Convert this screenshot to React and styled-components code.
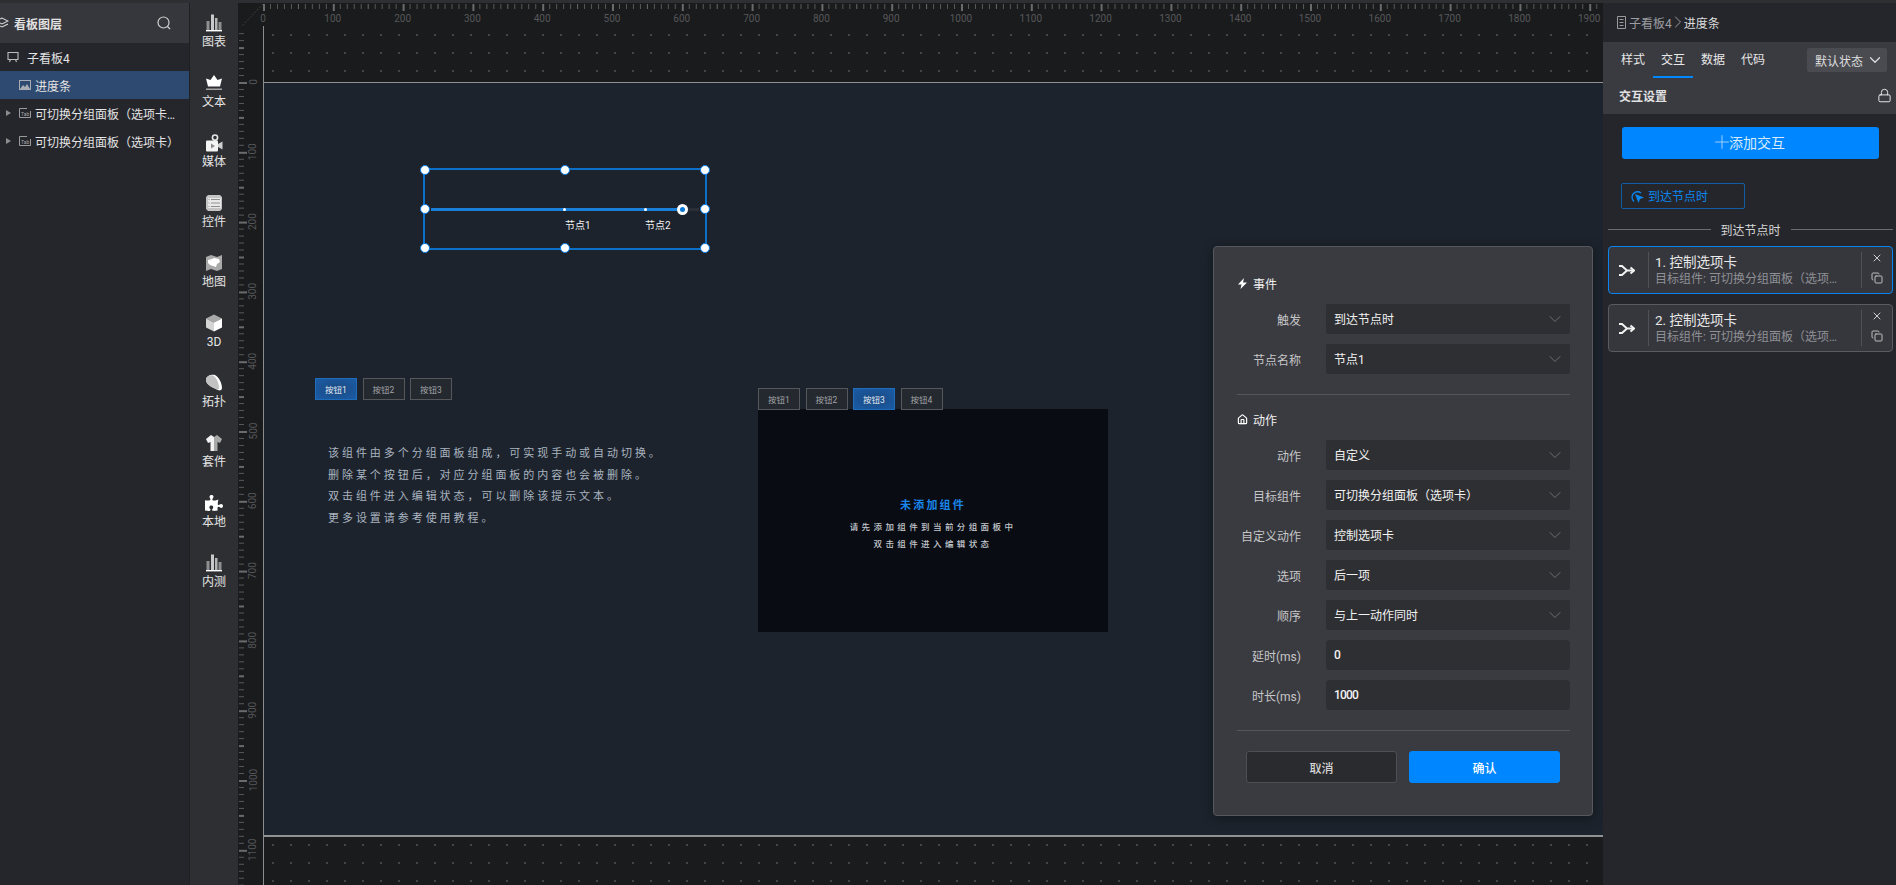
import React from 'react';
import styled, { createGlobalStyle } from 'styled-components';
import { ChevronDown, ChevronRight, X, Copy, Lock, Home, Plus } from 'lucide-react';
import { FaPuzzlePiece } from 'react-icons/fa';

const SCALE = 0.698;

const toolItems = [
  ['chart', '图表'], ['text', '文本'], ['media', '媒体'], ['control', '控件'], ['map', '地图'],
  ['cube', '3D'], ['topo', '拓扑'], ['suit', '套件'], ['local', '本地'], ['chart', '内测'],
];

const eventRows = [['触发', '到达节点时'], ['节点名称', '节点1']];
const actionRows = [
  ['动作', '自定义'], ['目标组件', '可切换分组面板（选项卡）'], ['自定义动作', '控制选项卡'],
  ['选项', '后一项'], ['顺序', '与上一动作同时'],
];
const inputRows = [['延时(ms)', '0'], ['时长(ms)', '1000']];

const handles = [[0, 0], [50, 0], [100, 0], [0, 50], [100, 50], [0, 100], [50, 100], [100, 100]];

const ToolIcon = ({ kind }) => {
  if (kind === 'local') return <FaPuzzlePiece size={18} color="#fff" />;
  return (
    <svg width="18" height="18" viewBox="0 0 18 18">
      {kind === 'chart' && (
        <>
          <rect x="1" y="16" width="16" height="1.4" fill="#fff" />
          <rect x="1.5" y="7" width="3" height="9" fill="#8f8f8f" />
          <rect x="6" y="0.5" width="3" height="15.5" fill="#c9c9c9" />
          <rect x="10" y="4" width="2.5" height="12" fill="#b5b5b5" />
          <rect x="13.5" y="8" width="3" height="8" fill="#8f8f8f" />
        </>
      )}
      {kind === 'text' && (
        <>
          <polygon points="9,1 12.5,6 17,4.5 15,12.5 3,12.5 1,4.5 5.5,6" fill="#fff" />
          <rect x="1" y="14.5" width="16" height="1.5" fill="#a5a5a5" />
        </>
      )}
      {kind === 'media' && (
        <>
          <circle cx="10" cy="3.6" r="2.6" fill="none" stroke="#e4e4e4" strokeWidth="1.6" />
          <rect x="1" y="6.5" width="12" height="11" rx="1" fill="#f4f4f4" />
          <polygon points="13,10 17.5,7.5 17.5,15.5 13,13" fill="#cfcfcf" />
          <polygon points="6,9.5 10,12 6,14.5" fill="#8a8a8a" />
        </>
      )}
      {kind === 'control' && (
        <>
          <path d="M3 1h12l2 2v12l-2 2H3l-2-2V3z" fill="#c4c4c4" />
          <rect x="3" y="4" width="13" height="10" fill="#e8e8e8" />
          <path d="M6 5.5h9M6 9h9M6 12.5h9" stroke="#8f8f8f" strokeWidth="1.2" />
          <path d="M3.5 5.5h1M3.5 9h1M3.5 12.5h1" stroke="#8f8f8f" strokeWidth="1.2" />
        </>
      )}
      {kind === 'map' && (
        <>
          <polygon points="1,3 6,1 12,3 17,1 17,15 12,17 6,15 1,17" fill="#a9a9a9" />
          <path d="M3 6l4-1 2-1 5 1 1 3-3 2-1 3-3-1-3-1-2-2z" fill="#fff" />
        </>
      )}
      {kind === 'cube' && (
        <>
          <polygon points="9,0.5 17,4.5 9,8.5 1,4.5" fill="#a8a8a8" />
          <polygon points="1,4.5 9,8.5 9,17.5 1,13.5" fill="#d4d4d4" />
          <polygon points="17,4.5 9,8.5 9,17.5 17,13.5" fill="#fff" />
        </>
      )}
      {kind === 'topo' && (
        <>
          <path d="M1 6C1 2 6 0 10 1c4 2 7 8 7 13 0 2-2 3-4 2C9 14 1 11 1 6z" fill="#fff" />
          <path d="M1 6C1 2 5 .5 8 1.5c4 2 6 8 6 13-1 1-1 1.5-2 1C8 14 1 11 1 6z" fill="#c2c2c2" />
        </>
      )}
      {kind === 'suit' && (
        <>
          <path d="M6 1L1 5l2 4 2.5-1v9H9V3z" fill="#f2f2f2" />
          <path d="M12 1l5 4-2 4-2.5-1v9H9V3z" fill="#a8a8a8" />
        </>
      )}
    </svg>
  );
};

const HRuler = () => {
  const ticks = [];
  for (let v = 0; v <= 1920; v += 10) ticks.push(v);
  return (
    <RulerSvg>
      {ticks.map((v) => {
        const major = v % 100 === 0;
        const mid = v % 50 === 0;
        return (
          <rect key={v} x={v * SCALE} y="1" width={major ? 2 : 1} height={major ? 7 : 5} fill={major || mid ? '#6a6b6d' : '#58595b'} />
        );
      })}
      {ticks.filter((v) => v % 100 === 0).map((v) => (
        <text key={v} x={v * SCALE} y="18.5" textAnchor="middle" fontSize="10" fill="#56575a" fontFamily="Roboto, sans-serif">{v}</text>
      ))}
    </RulerSvg>
  );
};

const VRuler = () => {
  const ticks = [];
  for (let v = -70; v <= 1200; v += 10) ticks.push(v);
  const y = (v) => 56 + v * SCALE;
  return (
    <RulerSvg>
      {ticks.map((v) => {
        const major = v % 100 === 0;
        const mid = v % 50 === 0;
        return (
          <rect key={v} x="1" y={y(v)} width={major ? 8 : 5} height={major || mid ? 2 : 1} fill={major || mid ? '#6a6b6d' : '#58595b'} />
        );
      })}
      {ticks.filter((v) => v % 100 === 0 && v >= 0).map((v) => (
        <text key={v} x="18.5" y={y(v)} textAnchor="middle" fontSize="10" fill="#56575a" fontFamily="Roboto, sans-serif"
          transform={`rotate(-90 18.5 ${y(v)})`}>{v}</text>
      ))}
    </RulerSvg>
  );
};

const FormRow = ({ label, value, input }) => (
  <Row>
    <RowLabel>{label}</RowLabel>
    <Field $input={input}>
      <span>{value}</span>
      {!input && <ChevronDown size={20} color="#6d6e72" strokeWidth={1.2} />}
    </Field>
  </Row>
);

const ActionCard = ({ index, active }) => (
  <Card $active={active}>
    <CardIcon>
      <svg width="16" height="11" viewBox="0 0 16 11" fill="none" stroke="#f2f2f2" strokeWidth="2">
        <path d="M0 1h3l5 4.5h7M0 10h3l5-4.5" />
        <path d="M11.5 2.5L15 5.5 11.5 8.5" />
      </svg>
    </CardIcon>
    <CardBody>
      <CardTitle>{index}. 控制选项卡</CardTitle>
      <CardSub>目标组件: 可切换分组面板（选项卡）</CardSub>
    </CardBody>
    <CardActions>
      <X size={12} color="#cfcfcf" />
      <Copy size={12} color="#bdbdbd" />
    </CardActions>
  </Card>
);

export default function App() {
  return (
    <>
      <GlobalStyle />
      <TopStrip />
      <Shell>
        <Sidebar>
          <SidebarHead>
            <HeadTitle>
              <svg width="14" height="12" viewBox="0 0 14 12" fill="none" stroke="#d8d8d8" strokeWidth="1.1">
                <path d="M7 1L1 4l6 3 6-3zM1 7l6 3 6-3" />
              </svg>
              <span>看板图层</span>
            </HeadTitle>
            <svg width="14" height="14" viewBox="0 0 14 14" fill="none" stroke="#cfcfcf" strokeWidth="1.2">
              <circle cx="6.5" cy="6.5" r="5.5" />
              <path d="M10.5 10.5l2.5 2.5" />
            </svg>
          </SidebarHead>
          <LayerRow $indent={7} $gap={8}>
            <svg width="12" height="12" viewBox="0 0 12 12" fill="none" stroke="#bdbdbd" strokeWidth="1.1">
              <path d="M1 1.5h10v7H1zM3.5 8.5L2.5 11M8.5 8.5l1 2.5" />
            </svg>
            <span>子看板4</span>
          </LayerRow>
          <LayerRow $indent={19} $active>
            <svg width="12" height="10" viewBox="0 0 12 10">
              <rect x=".5" y=".5" width="11" height="9" fill="none" stroke="#a8adb6" />
              <path d="M1 9l3-4 2 2 2-3 3 5z" fill="#a8adb6" />
            </svg>
            <span>进度条</span>
          </LayerRow>
          {['可切换分组面板（选项卡）1', '可切换分组面板（选项卡）'].map((name) => (
            <LayerRow key={name} $indent={6}>
              <Caret />
              <svg width="12" height="10" viewBox="0 0 12 10">
                <path d="M8 .5H.5v9h11V3" fill="none" stroke="#9b9b9b" />
                <text x="2" y="7.5" fontSize="5" fill="#a8a8a8" fontFamily="Roboto, sans-serif">Tab</text>
              </svg>
              <span>{name}</span>
            </LayerRow>
          ))}
        </Sidebar>

        <Toolbox>
          {toolItems.map(([kind, label]) => (
            <ToolItem key={label}>
              <ToolGlyph><ToolIcon kind={kind} /></ToolGlyph>
              <span>{label}</span>
            </ToolItem>
          ))}
        </Toolbox>

        <Workspace>
          <Corner>
            <svg width="25" height="23" viewBox="0 0 25 23" stroke="#4a4b4d" strokeDasharray="1.5 2">
              <path d="M25 1L4 23" />
            </svg>
          </Corner>
          <HRuler />
          <VRuler />
          <Stage>
            <Page>
              <Selection>
                <Track>
                  <TrackFill />
                </Track>
                <NodeDot $x={138.5} />
                <NodeDot $x={219} />
                <NodeLabel $x={140.5}>节点1</NodeLabel>
                <NodeLabel $x={220.5}>节点2</NodeLabel>
                <Thumb />
                {handles.map(([x, y]) => <Handle key={`${x}-${y}`} $x={x} $y={y} />)}
              </Selection>

              <ChipGroup>
                <Chip $active>按钮1</Chip>
                <Chip>按钮2</Chip>
                <Chip>按钮3</Chip>
              </ChipGroup>

              <Hint>
                <p>该组件由多个分组面板组成，可实现手动或自动切换。</p>
                <p>删除某个按钮后，对应分组面板的内容也会被删除。</p>
                <p>双击组件进入编辑状态，可以删除该提示文本。</p>
                <p>更多设置请参考使用教程。</p>
              </Hint>

              <TabGroup>
                <ChipStrip>
                  <Chip>按钮1</Chip>
                  <Chip>按钮2</Chip>
                  <Chip $active>按钮3</Chip>
                  <Chip>按钮4</Chip>
                </ChipStrip>
                <TabPanel>
                  <EmptyTitle>未添加组件</EmptyTitle>
                  <EmptyText>请先添加组件到当前分组面板中</EmptyText>
                  <EmptyText>双击组件进入编辑状态</EmptyText>
                </TabPanel>
              </TabGroup>
            </Page>

            <Dialog>
              <SectionHead>
                <svg width="11" height="11" viewBox="0 0 11 11"><polygon points="7,0 1,6.5 4.5,6.5 3.5,11 10,4.5 6,4.5" fill="#fff" /></svg>
                <span>事件</span>
              </SectionHead>
              <Rows>{eventRows.map(([l, v]) => <FormRow key={l} label={l} value={v} />)}</Rows>
              <DialogRule $top={20} $bottom={14} />
              <SectionHead>
                <Home size={11} color="#fff" strokeWidth={2.6} />
                <span>动作</span>
              </SectionHead>
              <Rows>
                {actionRows.map(([l, v]) => <FormRow key={l} label={l} value={v} />)}
                {inputRows.map(([l, v]) => <FormRow key={l} label={l} value={v} input />)}
              </Rows>
              <DialogRule $top={20} $bottom={20} />
              <DialogFooter>
                <FooterButton>取消</FooterButton>
                <FooterButton $primary>确认</FooterButton>
              </DialogFooter>
            </Dialog>
          </Stage>
        </Workspace>

        <Panel>
          <Crumbs>
            <svg width="11" height="13" viewBox="0 0 11 13" fill="none" stroke="#9a9a9a">
              <path d="M1.5.5h8v12h-8zM3.5 3.5h4M3.5 6.5h4M3.5 9.5h4" />
            </svg>
            <CrumbParent>子看板4</CrumbParent>
            <CrumbSep size={20} color="#9a9a9a" strokeWidth={1.2} />
            <CrumbCurrent>进度条</CrumbCurrent>
          </Crumbs>
          <PanelTabs>
            <TabRow>
              <TabItem>样式</TabItem>
              <TabItem $active>交互</TabItem>
              <TabItem>数据</TabItem>
              <TabItem>代码</TabItem>
              <StateSelect>
                <span>默认状态</span>
                <ChevronDown size={18} color="#e0e0e0" strokeWidth={1.6} />
              </StateSelect>
            </TabRow>
            <SettingRow>
              <span>交互设置</span>
              <Lock size={15} color="#e4e4e4" strokeWidth={1.6} />
            </SettingRow>
          </PanelTabs>
          <AddButton><AddPlus size={22} color="#a8d4f8" strokeWidth={1} />添加交互</AddButton>
          <TriggerTag>
            <svg width="14" height="14" viewBox="0 0 14 14">
              <path d="M4 12.5A5.5 5.5 0 1 1 11 4" fill="none" stroke="#0b86f0" strokeWidth="1.3" />
              <polygon points="5,5 14,8.5 10,10 8.5,14" fill="#0b86f0" />
            </svg>
            <span>到达节点时</span>
          </TriggerTag>
          <TriggerDivider><span>到达节点时</span></TriggerDivider>
          <ActionCard index={1} active />
          <ActionCard index={2} />
        </Panel>
      </Shell>
    </>
  );
}

const GlobalStyle = createGlobalStyle`
  * { box-sizing: border-box; }
  html, body { margin: 0; height: 100%; overflow: hidden; background: #25262b; }
  body {
    font-family: Roboto, "Noto Sans CJK SC", sans-serif;
    font-size: 12px;
    color: #e6e6e6;
  }
  p { margin: 0; }
`;

const TopStrip = styled.div`
  height: 3px;
  background: #2e2f33;
`;

const Shell = styled.div`
  display: flex;
  height: 882px;
`;

const Sidebar = styled.aside`
  width: 190px;
  flex: none;
  background: #25262b;
  border-right: 1px solid #1f2024;
`;

const SidebarHead = styled.div`
  height: 40px;
  background: #36373d;
  display: flex;
  align-items: center;
  justify-content: space-between;
  padding-right: 18px;
`;

const HeadTitle = styled.div`
  display: flex;
  align-items: center;
  gap: 5px;
  margin-left: -5px;
  font-weight: 700;
  color: #e2e2e2;
`;

const LayerRow = styled.div`
  height: 28px;
  display: flex;
  align-items: center;
  gap: ${(p) => p.$gap || 4}px;
  padding-left: ${(p) => p.$indent}px;
  padding-right: 8px;
  background: ${(p) => (p.$active ? '#2f4a70' : 'transparent')};
  color: #e4e4e4;
  svg { flex: none; }
  span { overflow: hidden; white-space: nowrap; text-overflow: ellipsis; }
`;

const Caret = styled.i`
  flex: none;
  width: 0;
  height: 0;
  margin-right: 4px;
  border-left: 5px solid #8d8d8d;
  border-top: 3.5px solid transparent;
  border-bottom: 3.5px solid transparent;
`;

const Toolbox = styled.nav`
  width: 48px;
  flex: none;
  background: #2e2f33;
  display: flex;
  flex-direction: column;
  padding-top: 11px;
`;

const ToolItem = styled.div`
  height: 60px;
  display: flex;
  flex-direction: column;
  align-items: center;
  color: #e4e4e4;
  line-height: 16px;
`;

const ToolGlyph = styled.div`
  width: 18px;
  height: 18px;
  margin-bottom: 2px;
`;

const Workspace = styled.main`
  flex: 1;
  display: grid;
  grid-template-columns: 25px 1fr;
  grid-template-rows: 23px 1fr;
  background: #1a1b1d;
  overflow: hidden;
`;

const Corner = styled.div`
  line-height: 0;
`;

const RulerSvg = styled.svg`
  width: 100%;
  height: 100%;
  display: block;
  overflow: visible;
  background: #1a1b1d;
`;

const Stage = styled.div`
  position: relative;
  padding-top: 56px;
  border-left: 1px solid #8a8c8e;
  background-color: #1a1b1d;
  background-image: radial-gradient(circle at 9px 9px, #434446 1px, transparent 1.3px);
  background-size: 18px 18px;
`;

const Page = styled.div`
  position: relative;
  height: 755px;
  background: #1c232c;
  border-top: 1px solid #8f9193;
  border-bottom: 2px solid #8f9193;
`;

const Selection = styled.div`
  position: absolute;
  left: 158.5px;
  top: 85px;
  width: 284.5px;
  height: 82px;
  border: 2px solid #0b70c8;
`;

const Handle = styled.i`
  position: absolute;
  left: ${(p) => p.$x}%;
  top: ${(p) => p.$y}%;
  width: 10px;
  height: 10px;
  transform: translate(-50%, -50%);
  border-radius: 50%;
  background: #fff;
  border: 1.5px solid #0a7de6;
`;

const Track = styled.div`
  position: absolute;
  left: 6px;
  right: 6px;
  top: 38px;
  height: 3px;
  background: #2b3038;
`;

const TrackFill = styled.div`
  width: 248px;
  height: 100%;
  background: #1a7fd8;
`;

const NodeDot = styled.i`
  position: absolute;
  left: ${(p) => p.$x}px;
  top: 38px;
  width: 3px;
  height: 3px;
  border-radius: 50%;
  background: #fff;
`;

const NodeLabel = styled.span`
  position: absolute;
  left: ${(p) => p.$x}px;
  top: 48.5px;
  font-size: 10px;
  line-height: 14px;
  color: #f2f2f2;
`;

const Thumb = styled.i`
  position: absolute;
  left: 252.7px;
  top: 33.8px;
  width: 11px;
  height: 11px;
  border-radius: 50%;
  background: #0a78d8;
  border: 3px solid #fff;
`;

const ChipGroup = styled.div`
  position: absolute;
  left: 51px;
  top: 295px;
  display: flex;
  gap: 5.5px;
`;

const ChipStrip = styled.div`
  display: flex;
  gap: 5.5px;
  height: 21px;
`;

const Chip = styled.div`
  width: 42px;
  height: 22px;
  display: flex;
  align-items: center;
  justify-content: center;
  font-size: 8.5px;
  position: relative;
  color: ${(p) => (p.$active ? '#e6ebf2' : '#a2a4a8')};
  background: ${(p) => (p.$active ? 'radial-gradient(ellipse, #1b4f8c 30%, #1a5ca6)' : '#24282f')};
  border: 1px solid ${(p) => (p.$active ? '#1f6cbc' : '#55575b')};
`;

const Hint = styled.div`
  position: absolute;
  left: 64px;
  top: 360px;
  font-size: 11px;
  line-height: 21.6px;
  letter-spacing: 2.95px;
  color: #aab4c0;
  white-space: nowrap;
`;

const TabGroup = styled.div`
  position: absolute;
  left: 494px;
  top: 305px;
  width: 350px;
`;

const TabPanel = styled.div`
  height: 223px;
  background: #090c13;
  display: flex;
  flex-direction: column;
  align-items: center;
  padding-top: 89px;
`;

const EmptyTitle = styled.div`
  font-size: 11px;
  font-weight: 700;
  line-height: 16px;
  letter-spacing: 2.2px;
  color: #1a86ea;
  margin-bottom: 5px;
`;

const EmptyText = styled.div`
  font-size: 8.5px;
  font-weight: 500;
  line-height: 17px;
  letter-spacing: 3.4px;
  color: #c4c8ce;
`;

const Dialog = styled.section`
  position: absolute;
  left: 949px;
  top: 220px;
  width: 380px;
  height: 570px;
  padding: 26px 22px 0 23px;
  background: #3a3b40;
  border: 1px solid #57585c;
  border-radius: 4px;
  box-shadow: 0 2px 12px rgba(0, 0, 0, 0.35);
`;

const SectionHead = styled.div`
  height: 20px;
  margin-bottom: 11px;
  display: flex;
  align-items: center;
  gap: 5px;
  color: #f0f0f0;
`;

const Rows = styled.div`
  display: flex;
  flex-direction: column;
  gap: 10px;
`;

const Row = styled.div`
  display: grid;
  grid-template-columns: 64px 244px;
  column-gap: 25px;
  align-items: center;
`;

const RowLabel = styled.label`
  text-align: right;
  white-space: nowrap;
  color: #c6c6c8;
`;

const Field = styled.div`
  height: 30px;
  display: flex;
  align-items: center;
  justify-content: space-between;
  padding: 0 5px 1px 8px;
  border-radius: ${(p) => (p.$input ? 4 : 2)}px;
  background: #2e2f33;
  color: #f2f2f2;
  font-weight: ${(p) => (p.$input ? 500 : 400)};
  letter-spacing: ${(p) => (p.$input ? '-0.8px' : '0')};
`;

const DialogRule = styled.div`
  height: 1px;
  background: #55565a;
  margin: ${(p) => p.$top}px 0 ${(p) => p.$bottom}px;
`;

const DialogFooter = styled.div`
  display: flex;
  gap: 12px;
  padding: 0 10px 0 9px;
`;

const FooterButton = styled.button`
  flex: 1;
  height: 32px;
  font: inherit;
  font-weight: 500;
  border-radius: 3px;
  color: ${(p) => (p.$primary ? '#fff' : '#d4d4d4')};
  background: ${(p) => (p.$primary ? '#0087ff' : '#2a2b2e')};
  border: 1px solid ${(p) => (p.$primary ? '#0087ff' : '#4e4f53')};
`;

const Panel = styled.aside`
  width: 293px;
  flex: none;
  background: #25262b;
`;

const Crumbs = styled.div`
  height: 39px;
  display: flex;
  align-items: center;
  gap: 1px;
  padding: 0 0 1px 13px;
  svg:first-child { margin-right: 1px; }
`;

const CrumbSep = styled(ChevronRight)`
  margin: 0 -5px;
`;

const CrumbParent = styled.span`
  color: #9c9da1;
`;

const CrumbCurrent = styled.span`
  color: #dcdcdc;
`;

const PanelTabs = styled.div`
  height: 72px;
  background: #3a3b41;
`;

const TabRow = styled.div`
  height: 36px;
  display: flex;
  padding-left: 10px;
`;

const TabItem = styled.div`
  width: 40px;
  height: 36px;
  line-height: 36px;
  text-align: center;
  color: #e8e8e8;
  border-bottom: 2px solid ${(p) => (p.$active ? '#0087ff' : 'transparent')};
`;

const StateSelect = styled.div`
  width: 80px;
  height: 24px;
  margin: 6px 9px 0 auto;
  display: flex;
  align-items: center;
  justify-content: space-between;
  padding: 0 3px 0 8px;
  border-radius: 2px;
  background: #4a4b51;
  color: #dedede;
`;

const SettingRow = styled.div`
  height: 36px;
  display: flex;
  align-items: center;
  justify-content: space-between;
  padding: 0 4px 1px 16px;
  font-weight: 700;
  color: #e2e2e2;
`;

const AddButton = styled.button`
  width: 257px;
  height: 32px;
  margin: 13px 0 0 19px;
  padding: 0 0 2px;
  display: flex;
  align-items: center;
  justify-content: center;
  border: 0;
  border-radius: 3px;
  background: #0087ff;
  color: #d8ebfb;
  font: inherit;
  font-size: 14px;
`;

const AddPlus = styled(Plus)`
  margin: 0 -4px 0 -5px;
`;

const TriggerTag = styled.div`
  width: 124px;
  height: 26px;
  margin: 24px 0 0 18px;
  display: flex;
  align-items: center;
  gap: 4px;
  padding: 0 0 1px 8px;
  border: 1px solid #0f5da5;
  border-radius: 2px;
  color: #0b86f0;
`;

const TriggerDivider = styled.div`
  height: 18px;
  margin: 11px 3px 0 5px;
  display: flex;
  align-items: center;
  gap: 10px;
  color: #d6d6d6;
  &::before, &::after {
    content: '';
    flex: 1;
    height: 1px;
    background: #6a6b6f;
  }
`;

const Card = styled.div`
  width: 285px;
  height: 48px;
  margin: ${(p) => (p.$active ? 8 : 10)}px 0 0 5px;
  display: flex;
  align-items: center;
  background: #36373d;
  border: 1px solid ${(p) => (p.$active ? '#0a84f0' : '#5a5b60')};
  border-radius: 4px;
`;

const CardIcon = styled.div`
  width: 40px;
  height: 36px;
  flex: none;
  display: flex;
  align-items: center;
  justify-content: center;
  padding-right: 4px;
  border-right: 1px solid #505156;
`;

const CardBody = styled.div`
  flex: 1;
  min-width: 0;
  padding: 0 20px 0 6px;
`;

const CardTitle = styled.div`
  font-size: 13.5px;
  line-height: 18px;
  color: #e8e8e8;
`;

const CardSub = styled.div`
  line-height: 16px;
  color: #8f9095;
  white-space: nowrap;
  overflow: hidden;
  text-overflow: ellipsis;
`;

const CardActions = styled.div`
  width: 31px;
  height: 36px;
  flex: none;
  display: flex;
  flex-direction: column;
  align-items: center;
  justify-content: space-between;
  padding-bottom: 4px;
  border-left: 1px solid #505156;
`;
